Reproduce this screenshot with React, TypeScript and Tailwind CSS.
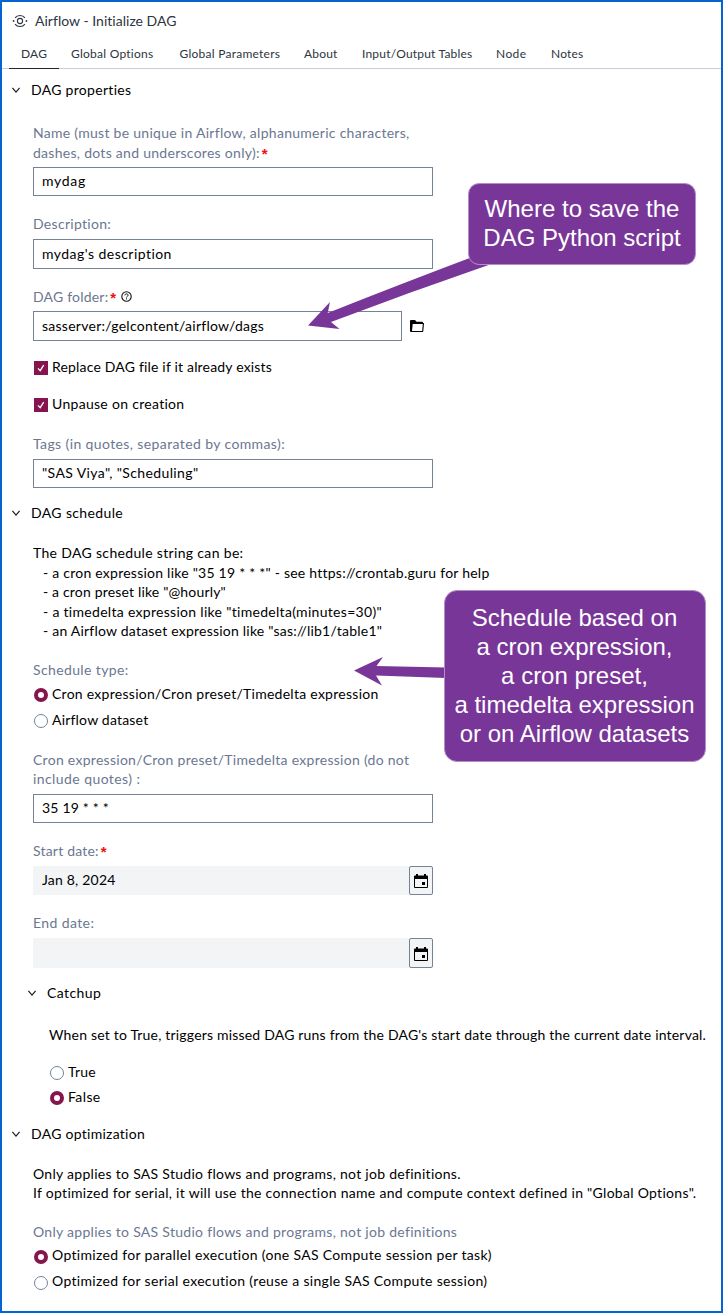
import type { ReactNode } from "react";

function Chevron() {
  return (
    <svg className="mr-[9px] h-[10px] w-[12px] shrink-0" viewBox="0 0 12 10" fill="none">
      <path d="M2.4 2.8 6 7.1 9.6 2.8" stroke="#1a1a1a" strokeWidth="1.15" />
    </svg>
  );
}

function Section({ className, children }: { className: string; children: ReactNode }) {
  return (
    <h2 className={`flex h-5 items-center leading-5 text-black ${className}`}>
      <Chevron />
      {children}
    </h2>
  );
}

function Label({ className, children }: { className: string; children: ReactNode }) {
  return <div className={`whitespace-nowrap leading-[19.5px] text-[#6b7791] ${className}`}>{children}</div>;
}

function Star() {
  return (
    <span className="relative top-px ml-[2px] font-['Liberation_Sans',sans-serif] text-[15px] leading-none font-bold tracking-normal text-[#ee1111]">
      *
    </span>
  );
}

function Field({ className, children }: { className: string; children: ReactNode }) {
  return (
    <div className={`flex items-center border border-[#768396] bg-white pb-[2px] pl-2 text-black ${className}`}>
      {children}
    </div>
  );
}

function Checkbox({ className, children }: { className: string; children: ReactNode }) {
  return (
    <div className={`flex h-5 items-center gap-1 pl-px text-black ${className}`}>
      <svg className="h-[14px] w-[14px] shrink-0" viewBox="0 0 14 14" fill="none">
        <rect width="14" height="14" fill="#86144f" />
        <path d="M4 7.4 6.2 9.6 9.7 4.2" stroke="#fff" strokeWidth="1.3" />
      </svg>
      <span className="mb-[2px] leading-5">{children}</span>
    </div>
  );
}

function Radio({ on, className, children }: { on?: boolean; className: string; children: ReactNode }) {
  return (
    <div className={`flex h-5 items-center gap-1 pl-px whitespace-nowrap text-black ${className}`}>
      <svg className="mt-[2px] h-[14px] w-[14px] shrink-0" viewBox="0 0 14 14" fill="none">
        {on ? (
          <circle cx="7" cy="7" r="5" stroke="#86144f" strokeWidth="4" />
        ) : (
          <circle cx="7" cy="7" r="6.5" stroke="#76829b" strokeWidth="1" />
        )}
      </svg>
      <span className="mb-px leading-5">{children}</span>
    </div>
  );
}

function DateField({ className, children }: { className: string; children?: ReactNode }) {
  return (
    <div className={`flex w-[400px] bg-[#f3f4f6] ${className}`}>
      <div className="flex flex-1 items-center pb-[2px] pl-[9px] text-black">{children}</div>
      <div className="flex w-6 items-center justify-center rounded-[2px] border border-[#768396]">
        <svg className="mt-px h-[14px] w-[14px]" viewBox="0 0 14 14">
          <path
            d="M2 0h2v1.4h6V0h2v1.4h1a1 1 0 0 1 1 1V13a1 1 0 0 1-1 1H1a1 1 0 0 1-1-1V2.4a1 1 0 0 1 1-1h1zM1 5v8h12V5z"
            fill="#000"
            fillRule="evenodd"
          />
          <rect x="8" y="8" width="3" height="3" fill="#000" />
        </svg>
      </div>
    </div>
  );
}

const tabs = [
  { name: "DAG", cls: "w-[50px] border-[#20262e]" },
  { name: "Global Options", cls: "w-[108.5px] border-transparent tracking-[0.25px]" },
  { name: "Global Parameters", cls: "w-[124.5px] border-transparent tracking-[0.25px]" },
  { name: "About", cls: "w-[58px] border-transparent" },
  { name: "Input/Output Tables", cls: "w-[134px] border-transparent" },
  { name: "Node", cls: "w-[55px] border-transparent tracking-[0.4px]" },
  { name: "Notes", cls: "w-[57px] border-transparent" },
];

export default function App() {
  return (
    <div className="relative h-[1313px] w-[723px] overflow-hidden border-2 border-[#0563d3] bg-white font-['Lato',sans-serif] text-[14px] tracking-[0.2px]">
      <header className="flex h-[38px] items-center pl-[10px] text-[#2d3540]">
        <svg className="mr-[7px] h-[16px] w-[16px]" viewBox="0 0 16 16" fill="none" stroke="#2d3540">
          <circle cx="8" cy="8" r="2.6" strokeWidth="1.1" />
          <path
            d="M3.1 4.9C4.3 3.2 6 2.5 8 2.500s3.700.7 4.900 2.400M3.100 11.100C4.300 12.800 6 13.500 8 13.500s3.700-.7 4.900-2.400"
            strokeWidth="1.100"
          />
          <circle cx="1.600" cy="8" r=".9" fill="#2d3540" stroke="none" />
          <circle cx="14.400" cy="8" r=".9" fill="#2d3540" stroke="none" />
        </svg>
        <h1 className="mb-[2px] tracking-[0.02px]">Airflow - Initialize DAG</h1>
      </header>
      <nav className="flex h-[29px] border-b border-[#c5cddb] pl-[7px] text-[12px] text-[#2d3540]">
        {tabs.map((t) => (
          <div
            key={t.name}
            className={`-mb-px flex h-[29px] shrink-0 items-center border-b pl-3 whitespace-nowrap ${t.cls}`}
          >
            {t.name}
          </div>
        ))}
      </nav>

      <Section className="mt-[11px] pl-2 tracking-[0.3px]">DAG properties</Section>
      <div className="pl-[31px]">
        <Label className="mt-[23px] tracking-[0.28px]">
          Name (must be unique in Airflow, alphanumeric characters,
          <br />
          dashes, dots and underscores only):
          <Star />
        </Label>
        <Field className="mt-[5px] h-[29px] w-[400px] tracking-[0.7px]">mydag</Field>
        <Label className="mt-[18px] tracking-[0.3px]">Description:</Label>
        <Field className="mt-[5.5px] h-[30px] w-[400px] tracking-[0.46px]">mydag's description</Field>
        <Label className="mt-[18px] flex items-center">
          DAG folder:
          <Star />
          <svg className="ml-[5px] h-[11px] w-[11px]" viewBox="0 0 11 11" fill="none" stroke="#111">
            <circle cx="5.5" cy="5.5" r="4.7" strokeWidth="1.1" />
            <path
              d="M3.9 4.4C3.9 3.4 4.6 2.9 5.5 2.900s1.600.5 1.600 1.400c0 1-1.600 1.100-1.600 2.200M5.500 7.300v1.100"
              strokeWidth="1"
            />
          </svg>
        </Label>
        <div className="mt-[4.5px] flex items-center">
          <Field className="h-[30px] w-[369px] tracking-[0.26px]">sasserver:/gelcontent/airflow/dags</Field>
          <svg className="ml-2 h-[12px] w-[14px]" viewBox="0 0 14 12">
            <path
              d="M0 1a1 1 0 0 1 1-1h4l1.500 1.700H12a1 1 0 0 1 1 1V3h1l-.7 8a1 1 0 0 1-1 1H1a1 1 0 0 1-1-1zM2.700 4.100 2 10.900h10.200l.6-6.800z"
              fill="#000"
              fillRule="evenodd"
            />
          </svg>
        </div>
        <Checkbox className="mt-[17px] tracking-[0.18px]">Replace DAG file if it already exists</Checkbox>
        <Checkbox className="mt-[17px] tracking-[0.3px]">Unpause on creation</Checkbox>
        <Label className="mt-[19px] tracking-[0.39px]">Tags (in quotes, separated by commas):</Label>
        <Field className="mt-[5.5px] h-[29px] w-[400px] tracking-[0.39px]">"SAS Viya", "Scheduling"</Field>
      </div>

      <Section className="mt-[15px] pl-2 tracking-[0.37px]">DAG schedule</Section>
      <div className="pl-[31px]">
        <div className="mt-[20px] leading-[19.5px] text-black">
          <div className="tracking-[0.33px]">The DAG schedule string can be:</div>
          <div className="pl-[10px] tracking-[0.24px]">
            - a cron expression like "35 19 * * *" - see https://crontab.guru for help
          </div>
          <div className="pl-[10px] tracking-[0.17px]">- a cron preset like "@hourly"</div>
          <div className="pl-[10px] tracking-[0.3px]">- a timedelta expression like "timedelta(minutes=30)"</div>
          <div className="pl-[10px] tracking-[0.22px]">- an Airflow dataset expression like "sas://lib1/table1"</div>
        </div>
        <Label className="mt-[19.5px] tracking-[0.38px]">Schedule type:</Label>
        <Radio on className="mt-[4.5px] tracking-[0.27px]">
          Cron expression/Cron preset/Timedelta expression
        </Radio>
        <Radio className="mt-[6px]">Airflow dataset</Radio>
        <Label className="mt-[19.5px] tracking-[0.28px]">
          Cron expression/Cron preset/Timedelta expression (do not
          <br />
          <span className="tracking-[0.42px]">include quotes) :</span>
        </Label>
        <Field className="mt-[5.5px] h-[29px] w-[400px]">35 19 * * *</Field>
        <Label className="mt-[18px]">
          Start date:
          <Star />
        </Label>
        <DateField className="mt-[5.5px] h-[29px]">Jan 8, 2024</DateField>
        <Label className="mt-[18px] tracking-[0.4px]">End date:</Label>
        <DateField className="mt-[5.5px] h-[30px]" />
      </div>

      <Section className="mt-[15px] pl-6 tracking-[0.4px]">Catchup</Section>
      <div className="pl-[47px]">
        <p className="mt-[22px] leading-5 tracking-[0.19px] whitespace-nowrap text-black">
          When set to True, triggers missed DAG runs from the DAG's start date through the current date interval.
        </p>
        <Radio className="mt-[17px]">True</Radio>
        <Radio on className="mt-[5px] tracking-[0.4px]">
          False
        </Radio>
      </div>

      <Section className="mt-[17px] pl-2 tracking-[0.27px]">DAG optimization</Section>
      <div className="pl-[31px]">
        <div className="mt-[19.8px] leading-[19.5px] tracking-[0.29px] whitespace-nowrap text-black">
          Only applies to SAS Studio flows and programs, not job definitions.
          <br />
          If optimized for serial, it will use the connection name and compute context defined in "Global Options".
        </div>
        <Label className="mt-[19.2px] tracking-[0.29px]">
          Only applies to SAS Studio flows and programs, not job definitions
        </Label>
        <Radio on className="mt-[4.5px] tracking-[0.32px]">
          Optimized for parallel execution (one SAS Compute session per task)
        </Radio>
        <Radio className="mt-[6px] tracking-[0.32px]">
          Optimized for serial execution (reuse a single SAS Compute session)
        </Radio>
      </div>

      <svg className="absolute -top-[2px] -left-[2px] h-[1313px] w-[723px]" viewBox="0 0 723 1313" fill="#783698">
        <path d="M308 325.5 330 302 327.7 313Q398 285 475 256L490 264.5Q410 292 331 322L339.5 329Z" />
        <path d="M354 670.5 383 657 376.5 666 446 667.5V678L376 675.5 382 685.5Z" />
      </svg>
      <div className="absolute top-[181px] left-[466px] flex h-[82px] w-[228px] items-center justify-center rounded-[11px] border border-[#b48fc6] bg-[#783698] pb-[2px] text-center font-['Liberation_Sans',sans-serif] text-[24px] leading-[29px] tracking-normal text-white">
        <p className="whitespace-nowrap">
          Where to save the
          <br />
          DAG Python script
        </p>
      </div>
      <div className="absolute top-[588px] left-[442px] flex h-[172px] w-[262px] items-center justify-center rounded-[13px] border border-[#b48fc6] bg-[#783698] pr-px pb-[2px] text-center font-['Liberation_Sans',sans-serif] text-[24px] leading-[29px] tracking-normal text-white">
        <p className="whitespace-nowrap">
          Schedule based on
          <br />
          a cron expression,
          <br />
          a cron preset,
          <br />
          a timedelta expression
          <br />
          or on Airflow datasets
        </p>
      </div>
    </div>
  );
}
